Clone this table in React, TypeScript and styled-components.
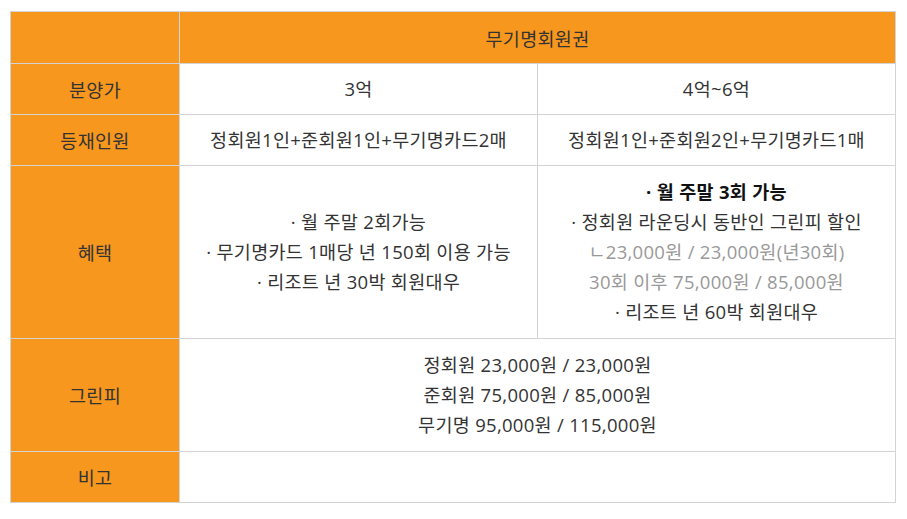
import * as React from "react";
import styled, { createGlobalStyle } from "styled-components";

const GlobalStyle = createGlobalStyle`
  body {
    margin: 0;
    background: #fff;
    font-family: "Open Sans", "Noto Sans CJK KR", sans-serif;
  }
`;

const Page = styled.div`
  padding: 11px 0 0 10px;
`;

const Table = styled.table`
  width: 886px;
  border-collapse: collapse;
  table-layout: fixed;
  border: 1px solid #d3d3d3;
  font-size: 18.5px;
  letter-spacing: 0.3px;
  color: #333;
`;

const Row = styled.tr<{ $h: number }>`
  height: ${(p) => p.$h}px;
`;

const Head = styled.th`
  background: #f7971e;
  border: 1px solid #d3d3d3;
  font-weight: 400;
  text-align: center;
  padding: 0;
`;

const Cell = styled.td`
  border: 1px solid #d3d3d3;
  text-align: center;
  padding: 0;
  line-height: 30px;
`;

const Strong = styled.div`
  font-weight: 700;
  color: #111;
`;

const Muted = styled.div`
  color: #999;
`;

export default function App() {
  return (
    <Page>
      <GlobalStyle />
      <Table>
        <colgroup>
          <col style={{ width: 169 }} />
          <col style={{ width: 358 }} />
          <col style={{ width: 358 }} />
        </colgroup>
        <tbody>
          <Row $h={52}>
            <Head />
            <Head colSpan={2}>무기명회원권</Head>
          </Row>
          <Row $h={51}>
            <Head>분양가</Head>
            <Cell>3억</Cell>
            <Cell>4억~6억</Cell>
          </Row>
          <Row $h={51}>
            <Head>등재인원</Head>
            <Cell>정회원1인+준회원1인+무기명카드2매</Cell>
            <Cell>정회원1인+준회원2인+무기명카드1매</Cell>
          </Row>
          <Row $h={173}>
            <Head>혜택</Head>
            <Cell>
              <div>· 월 주말 2회가능</div>
              <div>· 무기명카드 1매당 년 150회 이용 가능</div>
              <div>· 리조트 년 30박 회원대우</div>
            </Cell>
            <Cell>
              <Strong>· 월 주말 3회 가능</Strong>
              <div>· 정회원 라운딩시 동반인 그린피 할인</div>
              <Muted>ㄴ23,000원 / 23,000원(년30회)</Muted>
              <Muted>30회 이후 75,000원 / 85,000원</Muted>
              <div>· 리조트 년 60박 회원대우</div>
            </Cell>
          </Row>
          <Row $h={113}>
            <Head>그린피</Head>
            <Cell colSpan={2}>
              <div>정회원 23,000원 / 23,000원</div>
              <div>준회원 75,000원 / 85,000원</div>
              <div>무기명 95,000원 / 115,000원</div>
            </Cell>
          </Row>
          <Row $h={51}>
            <Head>비고</Head>
            <Cell colSpan={2} />
          </Row>
        </tbody>
      </Table>
    </Page>
  );
}
